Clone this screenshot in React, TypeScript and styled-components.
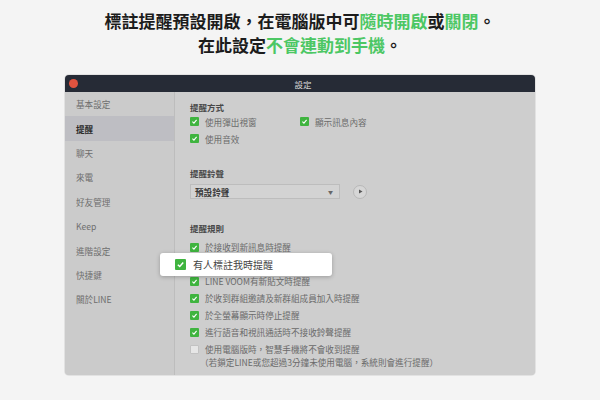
import styled, { createGlobalStyle } from "styled-components";

const GlobalStyle = createGlobalStyle`
  html, body {
    margin: 0;
    padding: 0;
    background: #f4f4f4;
  }
  body {
    font-family: "Noto Sans CJK TC", "Noto Sans", sans-serif;
  }
`;

const menu = ["基本設定", "提醒", "聊天", "來電", "好友管理", "Keep", "進階設定", "快捷鍵", "關於LINE"];

const rules: { label: string; checked: boolean }[] = [
  { label: "於接收到新訊息時提醒", checked: true },
  { label: "有人標註我時提醒", checked: true },
  { label: "LINE VOOM有新貼文時提醒", checked: true },
  { label: "於收到群組邀請及新群組成員加入時提醒", checked: true },
  { label: "於全螢幕顯示時停止提醒", checked: true },
  { label: "進行語音和視訊通話時不接收鈴聲提醒", checked: true },
];

function Check({ checked = true, size = 9 }: { checked?: boolean; size?: number }) {
  return (
    <Box $checked={checked} $size={size}>
      {checked && (
        <svg width={size - 2} height={size - 2} viewBox="0 0 10 10">
          <path d="M2 5.2 L4.2 7.3 L8 2.8" fill="none" stroke="#fff" strokeWidth="1.6" />
        </svg>
      )}
    </Box>
  );
}

export default function App() {
  return (
    <>
      <GlobalStyle />
      <Page>
        <Heading>
          <div>
            標註提醒預設開啟，在電腦版中可<Green>隨時開啟</Green>或<Green>關閉</Green>。
          </div>
          <div>
            在此設定<Green>不會連動到手機</Green>。
          </div>
        </Heading>
        <Window>
          <TitleBar>
            <CloseDot />
            <Title>設定</Title>
          </TitleBar>
          <Body>
            <Sidebar>
              {menu.map((m) => (
                <MenuItem key={m} $active={m === "提醒"}>
                  {m}
                </MenuItem>
              ))}
            </Sidebar>
            <Main>
              <SectionTitle>提醒方式</SectionTitle>
              <TwoCol>
                <Option>
                  <Check />
                  使用彈出視窗
                </Option>
                <Option>
                  <Check />
                  顯示訊息內容
                </Option>
              </TwoCol>
              <Option>
                <Check />
                使用音效
              </Option>

              <SectionTitle $gap={20} $after={5}>提醒鈴聲</SectionTitle>
              <SoundRow>
                <Select>
                  預設鈴聲
                  <Arrow>▼</Arrow>
                </Select>
                <PlayButton>
                  <svg width="5" height="5" viewBox="0 0 10 10">
                    <path d="M2 1 L9 5 L2 9 Z" fill="#555" />
                  </svg>
                </PlayButton>
              </SoundRow>

              <SectionTitle $gap={23} $after={4.5}>提醒規則</SectionTitle>
              {rules.map((r) => (
                <Option key={r.label}>
                  <Check checked={r.checked} />
                  {r.label}
                </Option>
              ))}
              <Option>
                <Check checked={false} />
                使用電腦版時，智慧手機將不會收到提醒
              </Option>
              <SubNote>（若鎖定LINE或您超過3分鐘未使用電腦，系統則會進行提醒）</SubNote>

              <Popup>
                <Check size={11} />
                有人標註我時提醒
              </Popup>
            </Main>
          </Body>
        </Window>
      </Page>
    </>
  );
}

const Page = styled.div`
  width: 600px;
  height: 400px;
  display: flex;
  flex-direction: column;
  align-items: center;
  overflow: hidden;
`;

const Heading = styled.div`
  margin-top: 9px;
  text-align: center;
  font-size: 17px;
  font-weight: 700;
  line-height: 24px;
  color: #1c1c1c;
`;

const Green = styled.span`
  color: #4cc764;
`;

const Window = styled.div`
  margin-top: 18px;
  width: 470px;
  height: 300px;
  border-radius: 4px;
  overflow: hidden;
  display: flex;
  flex-direction: column;
  background: #cdcdcd;
  box-shadow: 0 0 0 1px #e2e2e2;
`;

const TitleBar = styled.div`
  position: relative;
  height: 17px;
  flex-shrink: 0;
  background: #262b36;
  display: flex;
  align-items: center;
  justify-content: center;
`;

const CloseDot = styled.span`
  position: absolute;
  left: 4px;
  top: 4px;
  width: 9px;
  height: 9px;
  border-radius: 50%;
  background: #e0533f;
`;

const Title = styled.span`
  font-size: 8.5px;
  color: #d8d8d8;
  margin-left: 6px;
`;

const Body = styled.div`
  flex: 1;
  display: flex;
`;

const Sidebar = styled.div`
  width: 109px;
  background: #cbcbcb;
  border-right: 1px solid #bdbdbd;
  display: flex;
  flex-direction: column;
`;

const MenuItem = styled.div<{ $active?: boolean }>`
  height: 24.4px;
  display: flex;
  align-items: center;
  padding-left: 11px;
  font-size: 8.6px;
  color: ${(p) => (p.$active ? "#2a2a2a" : "#6e6e6e")};
  font-weight: ${(p) => (p.$active ? 700 : 400)};
  background: ${(p) => (p.$active ? "#bebec3" : "transparent")};
`;

const Main = styled.div`
  position: relative;
  flex: 1;
  padding: 9px 0 0 15px;
  display: flex;
  flex-direction: column;
  background: #cecece;
`;

const SectionTitle = styled.div<{ $gap?: number; $after?: number }>`
  margin-top: ${(p) => p.$gap ?? 0}px;
  margin-bottom: ${(p) => p.$after ?? 0}px;
  height: 12px;
  line-height: 12px;
  font-size: 8.5px;
  font-weight: 700;
  color: #484848;
`;

const TwoCol = styled.div`
  display: grid;
  grid-template-columns: 110px auto;
`;

const Option = styled.div`
  height: 17px;
  flex-shrink: 0;
  display: flex;
  align-items: center;
  gap: 6px;
  font-size: 8.6px;
  color: #6a6a6a;
  white-space: nowrap;
`;

const SubNote = styled.div`
  padding-left: 10px;
  margin-top: -2px;
  font-size: 8.6px;
  line-height: 12px;
  color: #6a6a6a;
  white-space: nowrap;
`;

const Box = styled.span<{ $checked: boolean; $size: number }>`
  width: ${(p) => p.$size}px;
  height: ${(p) => p.$size}px;
  flex-shrink: 0;
  border-radius: 1px;
  box-sizing: border-box;
  display: flex;
  align-items: center;
  justify-content: center;
  background: ${(p) => (p.$checked ? "#3fb43f" : "#e6e6e6")};
  border: ${(p) => (p.$checked ? "none" : "1px solid #c2c2c2")};
`;

const SoundRow = styled.div`
  display: flex;
  align-items: center;
  gap: 13px;
`;

const Select = styled.div`
  width: 150px;
  height: 15px;
  box-sizing: border-box;
  border: 1px solid #bdbdbd;
  background: #d3d3d3;
  display: flex;
  align-items: center;
  justify-content: space-between;
  padding: 0 6px 0 4px;
  font-size: 8.6px;
  font-weight: 700;
  color: #3a3a3a;
`;

const Arrow = styled.span`
  font-size: 5px;
  color: #666;
`;

const PlayButton = styled.span`
  width: 14px;
  height: 14px;
  box-sizing: border-box;
  border-radius: 50%;
  border: 1px solid #b8b8b8;
  background: #d6d6d6;
  display: flex;
  align-items: center;
  justify-content: center;
  padding-left: 1px;
`;

const Popup = styled.div`
  position: absolute;
  left: -15px;
  top: 161px;
  width: 172px;
  height: 23px;
  box-sizing: border-box;
  padding-left: 15px;
  border-radius: 3px;
  background: #ffffff;
  box-shadow: 0 1px 4px rgba(0, 0, 0, 0.25);
  display: flex;
  align-items: center;
  gap: 7px;
  font-size: 10px;
  color: #444;
`;
